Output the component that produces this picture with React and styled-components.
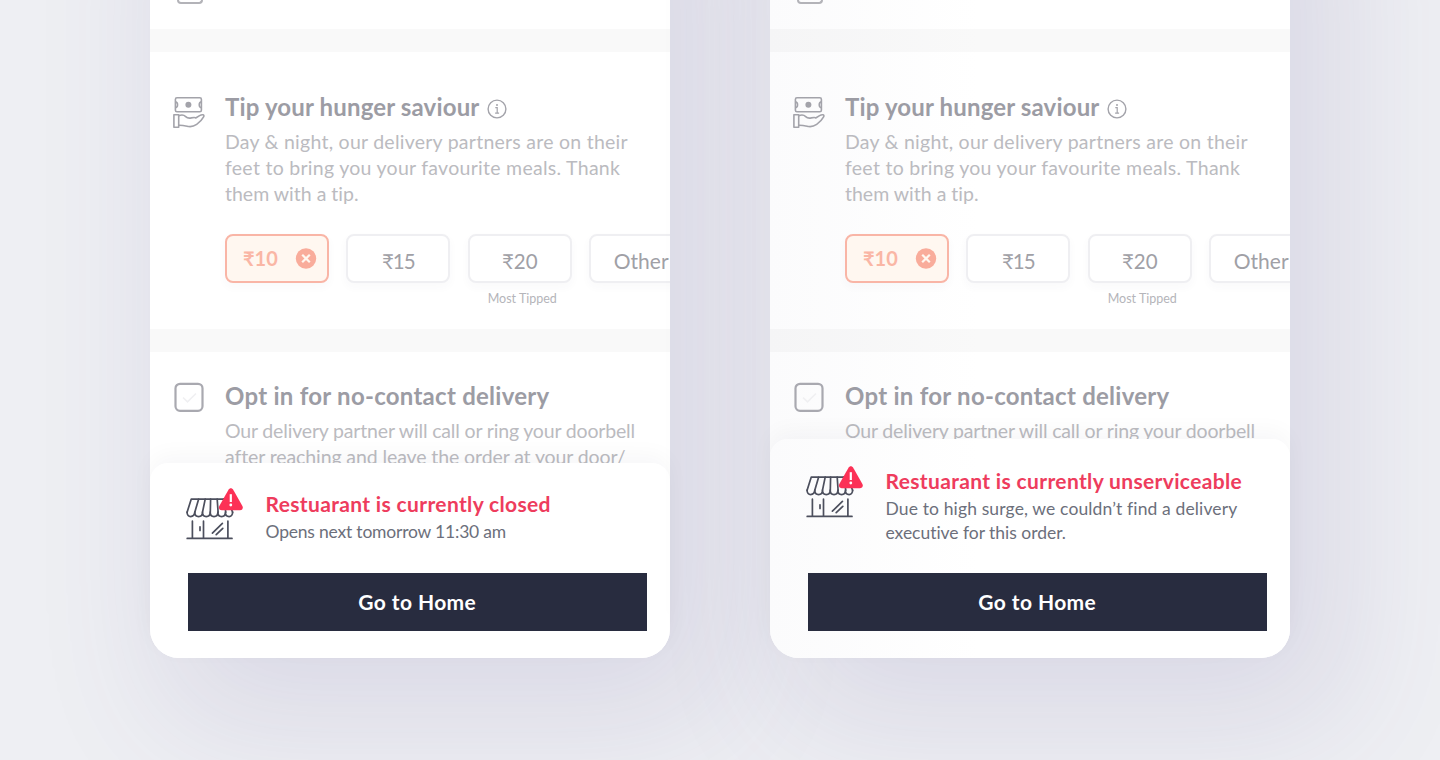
import React from 'react';
import styled, { createGlobalStyle } from 'styled-components';

const OVERFLOW_TOP = 160;
const GREY = '#a3a3aa';

const GlobalStyle = createGlobalStyle`
  body {
    margin: 0;
    overflow: hidden;
    background: #eeeff3;
    font-family: Lato, "Open Sans", sans-serif;
    font-variant-ligatures: none;
  }

  * {
    box-sizing: border-box;
  }
`;

const Page = styled.main`
  display: flex;
  gap: 100px;
  height: 760px;
  padding: 0 150px;
  overflow: hidden;
`;

const Phone = styled.section`
  position: relative;
  flex: none;
  width: 520px;
  height: ${658 + OVERFLOW_TOP}px;
  margin-top: -${OVERFLOW_TOP}px;
  border-radius: 29px;
  background: ${({ $tinted }) => ($tinted ? 'linear-gradient(90deg, #fbfbfc, #fff 40%)' : '#fff')};
  box-shadow: 34px 44px 130px 20px rgba(88, 75, 140, 0.125);
`;

const Screen = styled.div`
  height: 100%;
  padding-top: ${OVERFLOW_TOP}px;
  border-radius: inherit;
  overflow: hidden;
`;

const PreviousRow = styled.div`
  height: 29px;
  padding-left: 27px;
`;

const PreviousBox = styled.div`
  width: 26px;
  height: 4px;
  border: 2px solid #b3b3b8;
  border-top: 0;
  border-radius: 0 0 4px 4px;
`;

const Divider = styled.div`
  height: 23px;
  background: rgba(0, 0, 0, 0.025);
`;

const Section = styled.div`
  display: flex;
  height: ${({ $height }) => $height}px;
  padding-top: ${({ $top }) => $top}px;
`;

const IconColumn = styled.div`
  flex: none;
  width: 75px;
  padding: ${({ $top }) => $top}px 0 0 22px;

  svg {
    display: block;
  }
`;

const Copy = styled.div`
  flex: none;
  width: 445px;
`;

const Title = styled.h3`
  display: flex;
  align-items: center;
  gap: 8px;
  margin: 0 0 7px;
  color: #9c9ca4;
  font-size: 24px;
  font-weight: 700;
  line-height: 30px;
  letter-spacing: ${({ $spacing }) => $spacing}px;
  white-space: nowrap;

  svg {
    margin-top: 3px;
  }
`;

const BodyLine = styled.div`
  color: #bbbbc0;
  font-size: 19.5px;
  line-height: 26px;
  letter-spacing: ${({ $spacing }) => $spacing}px;
  white-space: nowrap;
`;

const Chips = styled.div`
  display: flex;
  gap: 17.4px;
  margin-top: 27px;
`;

const ChipCell = styled.div`
  flex: none;
  width: 104px;
`;

const Chip = styled.button`
  display: flex;
  flex: none;
  align-items: center;
  justify-content: center;
  width: 104px;
  height: 49px;
  padding: 5px 0 0;
  border: 2px solid #efeff2;
  border-radius: 8px;
  background: #fff;
  box-shadow: 0 4px 10px rgba(60, 60, 90, 0.03);
  color: #a0a0a6;
  font-family: inherit;
  font-size: 20.5px;
  letter-spacing: ${({ $spacing }) => $spacing || 0}px;
`;

const ActiveChip = styled(Chip)`
  justify-content: space-between;
  padding: 0 10px 1px 16px;
  border-color: #f9b5a6;
  background: #fff7f0;
  color: #fab6a5;
  font-size: 20px;
  font-weight: 700;
`;

const OtherChip = styled(Chip)`
  padding-top: 4px;
  font-size: 21px;
`;

const ChipNote = styled.div`
  margin-top: 7px;
  padding-left: 5px;
  color: #b5b5ba;
  font-size: 12.5px;
  line-height: 17px;
  text-align: center;
`;

const Sheet = styled.div`
  position: absolute;
  right: 0;
  bottom: 0;
  left: 0;
  padding: ${({ $top }) => $top}px 23px 27px 36px;
  border-radius: 18px 18px 29px 29px;
  background: ${({ $tinted }) => ($tinted ? 'linear-gradient(90deg, #fbfbfc, #fff 40%)' : '#fff')};
  box-shadow: 0 -8px 22px rgba(40, 40, 60, 0.035);
`;

const Notice = styled.div`
  display: flex;
  margin-bottom: ${({ $gap }) => $gap}px;
`;

const NoticeIcon = styled.div`
  flex: none;
  width: 79.5px;
  height: 50px;
  margin-top: ${({ $shift }) => $shift}px;
`;

const NoticeTitle = styled.h4`
  margin: 0 0 3px;
  color: #ee3c5d;
  font-size: 21px;
  font-weight: 700;
  line-height: 26px;
  letter-spacing: 0.35px;
  white-space: nowrap;
`;

const NoticeLine = styled.div`
  color: #6c6f7b;
  font-size: 17.5px;
  line-height: 24px;
  letter-spacing: ${({ $spacing }) => $spacing}px;
  white-space: nowrap;
`;

const HomeButton = styled.button`
  display: block;
  width: 459.5px;
  height: 58px;
  margin-left: 1.5px;
  padding: 0 0 2px;
  border: 0;
  background: #282c3f;
  color: #fff;
  font-family: inherit;
  font-size: 21px;
  font-weight: 700;
  letter-spacing: 0.4px;
`;

const TipIcon = () => (
  <svg width="34" height="34" viewBox="0 0 34 34" fill="none" stroke={GREY} strokeWidth="1.6" strokeLinejoin="round">
    <rect x="3.4" y="1.8" width="26" height="14" rx="1.6" />
    <path d="M3.6 5.9c2.6.4 2.6 5.4 0 5.8M29.2 5.9c-2.6.4-2.6 5.4 0 5.8" />
    <circle cx="16.4" cy="8.8" r="3" fill={GREY} stroke="none" />
    <path d="M1.9 18.8h4.8v12.4H1.9z" />
    <path d="M6.7 19.8c3-1.4 5.2-1 7 .8 1.6 1.6 3.4 1.8 5.6 1.3 2-.5 3.9-.8 4.4.1l3.900-2.400c2.800-1.600 5.200-1 4 1.300-1.400 2.600-4.500 5.800-6.900 7.400-2.200 1.500-5.300 2.600-8 2.200-2.700-.5-5.500-1.300-10-1.200" />
  </svg>
);

const InfoIcon = () => (
  <svg width="20" height="20" viewBox="0 0 20 20" fill="none" stroke={GREY} strokeWidth="1.4">
    <circle cx="10" cy="10" r="8.9" />
    <path d="M8.3 8.6h1.900v5.400M8.100 14.200h4" strokeWidth="1.2" />
    <circle cx="10" cy="6" r="1" fill={GREY} stroke="none" />
  </svg>
);

const CheckboxIcon = () => (
  <svg width="34" height="34" viewBox="0 0 34 34" fill="none">
    <rect x="3.5" y="2.8" width="27" height="27" rx="4.5" stroke="#a9a9b0" strokeWidth="2.2" />
    <path d="M11 16.5l4.5 4.3 8.5-8.3" stroke="#f0f0f2" strokeWidth="1.6" />
  </svg>
);

const RemoveIcon = () => (
  <svg width="22" height="22" viewBox="0 0 22 22">
    <circle cx="11" cy="11.5" r="10.2" fill="#f9ac9b" />
    <path d="M7.2 7.7l7.6 7.6M14.8 7.7l-7.6 7.6" stroke="#fff7f0" strokeWidth="2.2" />
  </svg>
);

const StoreIcon = () => (
  <svg width="60" height="54" viewBox="0 0 60 54" fill="none" stroke="#4c4f5d" strokeWidth="1.7" strokeLinecap="round" strokeLinejoin="round">
    <path d="M1.1 25.2L5.2 12.2h36.600l4.800 13" />
    <path d="M12.6 12.2L8.8 25.2M19.2 12.2l-2.700 13M24.600 12.200l-.3 13M31.200 12.200l.9 13M37.600 12.200l2.200 13" />
    <path d="M1.1 25.2c-.3 5.800 7.100 5.800 7.700 0 .1 5.800 7.500 5.800 7.700 0 .1 5.800 7.500 5.800 7.700 0 .1 5.800 7.500 5.800 7.700 0 .1 5.800 7.300 5.800 7.500 0 .1 5.800 7.400 5.800 7.200 0" />
    <path d="M6.4 34.2v17M17.5 34.2v17M41.900 34.200v17M1.200 51.400h44.800M14 39.800v3.600" />
    <path d="M26.4 46.2l10-9.800M30.200 47.600l6.600-6.200" />
    <path d="M42.500 2.700c1.200-2 3.500-2 4.700 0l9.200 16.400c1.100 2-.2 4.200-2.400 4.200H35.700c-2.200 0-3.500-2.200-2.400-4.200z" fill="#fc3156" stroke="none" />
    <path d="M44.800 7.200v7.800" stroke="#fff" strokeWidth="2.2" strokeLinecap="butt" />
    <circle cx="44.8" cy="18" r="1.4" fill="#fff" stroke="none" />
  </svg>
);

const PHONES = [
  {
    id: 'closed',
    title: 'Restuarant is currently closed',
    lines: [{ text: 'Opens next tomorrow 11:30 am', spacing: -0.2 }],
    top: 28,
    gap: 29,
    iconShift: -4,
  },
  {
    id: 'unserviceable',
    tinted: true,
    title: 'Restuarant is currently unserviceable',
    lines: [
      { text: 'Due to high surge, we couldn’t find a delivery', spacing: 0.13 },
      { text: 'executive for this order.', spacing: -0.03 },
    ],
    top: 29,
    gap: 28,
    iconShift: -3.3,
  },
];

const TipSection = () => (
  <Section $height={277} $top={40}>
    <IconColumn $top={4}>
      <TipIcon />
    </IconColumn>
    <Copy>
      <Title $spacing={0.16}>
        Tip your hunger saviour
        <InfoIcon />
      </Title>
      <BodyLine $spacing={0.25}>Day &amp; night, our delivery partners are on their</BodyLine>
      <BodyLine $spacing={0.28}>feet to bring you your favourite meals. Thank</BodyLine>
      <BodyLine $spacing={0}>them with a tip.</BodyLine>
      <Chips>
        <ActiveChip>
          ₹10
          <RemoveIcon />
        </ActiveChip>
        <Chip $spacing={-0.9}>₹15</Chip>
        <ChipCell>
          <Chip>₹20</Chip>
          <ChipNote>Most Tipped</ChipNote>
        </ChipCell>
        <OtherChip>Other</OtherChip>
      </Chips>
    </Copy>
  </Section>
);

const OptInSection = () => (
  <Section $height={306} $top={29}>
    <IconColumn $top={0}>
      <CheckboxIcon />
    </IconColumn>
    <Copy>
      <Title $spacing={0.26}>Opt in for no-contact delivery</Title>
      <BodyLine $spacing={-0.17}>Our delivery partner will call or ring your doorbell</BodyLine>
      <BodyLine $spacing={-0.1}>after reaching and leave the order at your door/</BodyLine>
    </Copy>
  </Section>
);

const App = () => (
  <>
    <GlobalStyle />
    <Page>
      {PHONES.map(({ id, tinted, title, lines, top, gap, iconShift }) => (
        <Phone key={id} $tinted={tinted}>
          <Screen>
            <PreviousRow>
              <PreviousBox />
            </PreviousRow>
            <Divider />
            <TipSection />
            <Divider />
            <OptInSection />
          </Screen>
          <Sheet $top={top} $tinted={tinted}>
            <Notice $gap={gap}>
              <NoticeIcon $shift={iconShift}>
                <StoreIcon />
              </NoticeIcon>
              <div>
                <NoticeTitle>{title}</NoticeTitle>
                {lines.map(({ text, spacing }) => (
                  <NoticeLine key={text} $spacing={spacing}>{text}</NoticeLine>
                ))}
              </div>
            </Notice>
            <HomeButton>Go to Home</HomeButton>
          </Sheet>
        </Phone>
      ))}
    </Page>
  </>
);

export default App;
